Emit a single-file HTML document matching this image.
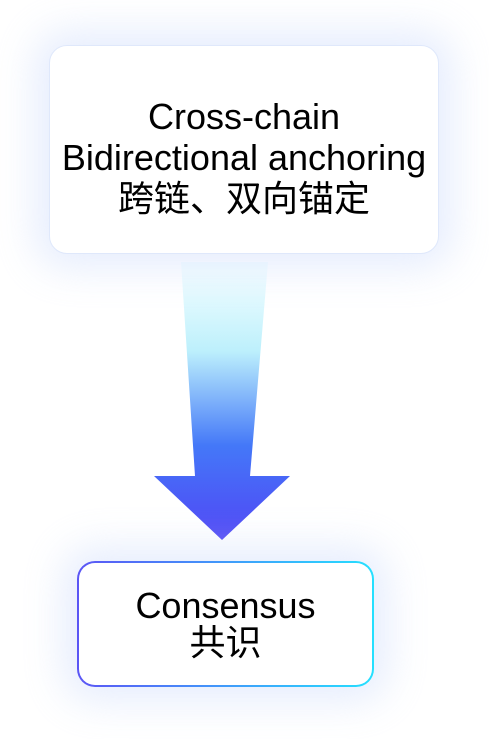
<!DOCTYPE html>
<html><head><meta charset="utf-8"><style>
html,body{margin:0;padding:0;width:489px;height:739px;background:#fff;overflow:hidden;position:relative;font-family:"Liberation Sans","Noto Sans CJK SC",sans-serif;color:#000}
.box1{position:absolute;left:49px;top:45px;width:390px;height:209px;box-sizing:border-box;padding-top:16px;border:1px solid #dfe8fb;border-radius:18px;background:#fff;box-shadow:0 0 40px 14px rgba(200,215,250,0.45);display:flex;flex-direction:column;justify-content:center;align-items:center;text-align:center;font-size:36px;line-height:41px;white-space:nowrap}
.box2{position:absolute;left:77px;top:561px;width:297px;height:126px;border-radius:18px;background:linear-gradient(90deg,#5b55f5,#25e0ff);box-shadow:0 0 40px 14px rgba(200,215,250,0.45)}
.box2 .in{position:absolute;left:2px;top:2px;right:2px;bottom:2px;border-radius:16px;background:#fff;display:flex;flex-direction:column;justify-content:center;align-items:center;font-size:36px;line-height:37px}
svg{position:absolute;left:0;top:0}
</style></head><body>
<svg width="489" height="739"><defs><linearGradient id="g" x1="0" y1="270" x2="0" y2="540" gradientUnits="userSpaceOnUse"><stop offset="0" stop-color="#f4feff"/><stop offset="0.3" stop-color="#bdf0fc"/><stop offset="0.65" stop-color="#4478f8"/><stop offset="1" stop-color="#5046f5"/></linearGradient></defs>
<polygon points="181,262 268,262 250,476 290,476 222,540 154,476 195,476" fill="url(#g)"/></svg>
<div class="box1"><div>Cross-chain</div><div>Bidirectional anchoring</div><div>跨链、双向锚定</div></div>
<div class="box2"><div class="in"><div>Consensus</div><div>共识</div></div></div>
</body></html>
